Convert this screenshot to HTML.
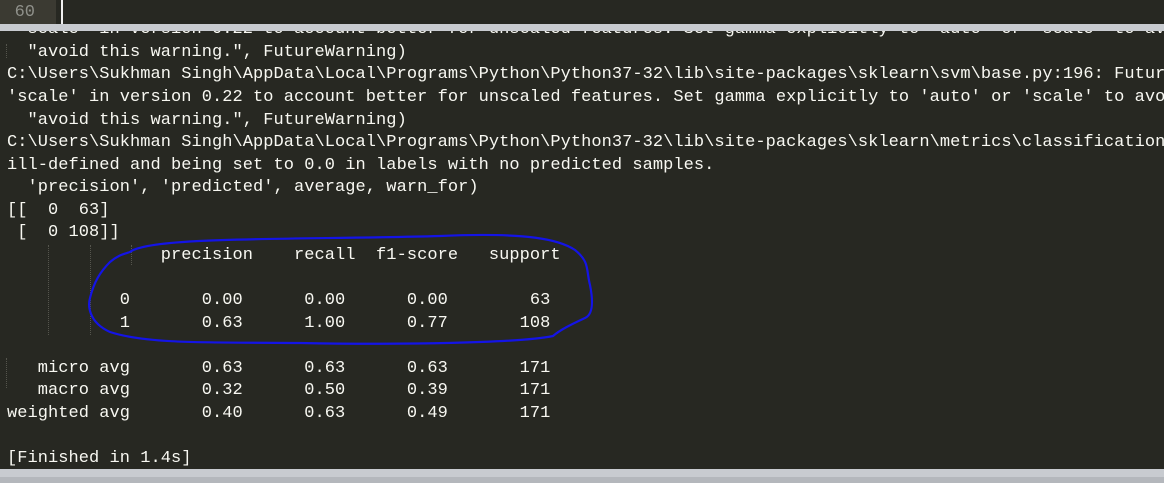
<!DOCTYPE html>
<html><head><meta charset="utf-8"><style>
html,body{margin:0;padding:0;overflow:hidden}
body{width:1164px;height:483px;background:#272822;position:relative;overflow:hidden}
#clip{position:absolute;left:0;top:0;width:1164px;height:483px;overflow:hidden}
#txt{position:absolute;left:7px;top:19.4px;margin:0;font-family:"Liberation Mono",monospace;font-size:17px;line-height:22.55px;color:#f8f8f2;white-space:pre;letter-spacing:0.05px}
.top{position:absolute;left:0;top:0;width:1164px;height:24px;background:#272822}
.gut{position:absolute;left:0;top:0;width:56px;height:24px;background:#3b3a32;color:#8f908a;font-family:"Liberation Mono",monospace;font-size:17px;line-height:26px;text-align:right;box-sizing:border-box;padding-right:21px}
.cur{position:absolute;left:61px;top:0;width:2px;height:24px;background:#f0f0f0}
.bar{position:absolute;left:0;top:24px;width:1164px;height:7px;background:#c8cbd0}
.bb1{position:absolute;left:0;top:469px;width:1164px;height:8px;background:#c8cbd0}
.bb2{position:absolute;left:0;top:477px;width:1164px;height:6px;background:#b4b7bc}
.g{position:absolute;width:0;border-left:1px dotted #55554d}
</style></head><body>
<div id="clip">
<pre id="txt"> 'scale' in version 0.22 to account better for unscaled features. Set gamma explicitly to 'auto' or 'scale' to avoid
  "avoid this warning.", FutureWarning)
C:\Users\Sukhman Singh\AppData\Local\Programs\Python\Python37-32\lib\site-packages\sklearn\svm\base.py:196: FutureWarning
'scale' in version 0.22 to account better for unscaled features. Set gamma explicitly to 'auto' or 'scale' to avoid
  "avoid this warning.", FutureWarning)
C:\Users\Sukhman Singh\AppData\Local\Programs\Python\Python37-32\lib\site-packages\sklearn\metrics\classification.py
ill-defined and being set to 0.0 in labels with no predicted samples.
  'precision', 'predicted', average, warn_for)
[[  0  63]
 [  0 108]]
               precision    recall  f1-score   support

           0       0.00      0.00      0.00        63
           1       0.63      1.00      0.77       108

   micro avg       0.63      0.63      0.63       171
   macro avg       0.32      0.50      0.39       171
weighted avg       0.40      0.63      0.49       171

[Finished in 1.4s]</pre>
<div class="g" style="left:6px;top:44px;height:14px"></div>
<div class="g" style="left:48px;top:245px;height:90px"></div>
<div class="g" style="left:90px;top:245px;height:90px"></div>
<div class="g" style="left:131px;top:245px;height:20px"></div>
<div class="g" style="left:6px;top:358px;height:30px"></div>
<div class="top"></div>
<div class="gut">60</div>
<div class="cur"></div>
<div class="bar"></div>
<div class="bb1"></div>
<div class="bb2"></div>
<svg style="position:absolute;left:0;top:0" width="1164" height="483">
<path d="M130,252 C150,236 300,240 440,236 C530,232 560,240 575,250 C590,262 586,270 590,285 C594,305 592,315 585,318 C570,325 560,330 553,336 C520,343 400,345 300,343 C220,342 150,345 110,332 C88,322 88,305 90,298 C94,282 100,272 110,262 C118,255 124,254 130,252 Z" fill="none" stroke="#1414e6" stroke-width="2.2"/>
</svg>
</div>
</body></html>
